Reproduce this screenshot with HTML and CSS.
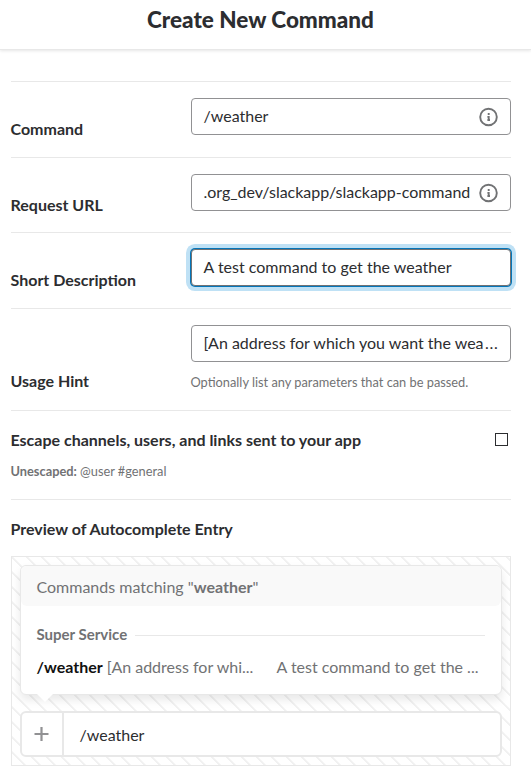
FILE: index.html
```
<!DOCTYPE html>
<html lang="en">
<head>
<meta charset="utf-8">
<title>Create New Command</title>
<link rel="stylesheet" href="styles.css">
</head>
<body>
<header class="header"><h1 class="title">Create New Command</h1></header>
<main class="form">
  <div class="row">
    <span class="label">Command</span>
    <div class="field"><span class="value">/weather</span>
      <svg class="info" viewBox="0 0 20 20"><circle cx="9.5" cy="10" r="8.3"/><path d="M9.7 6v2M8.4 9.9h1.3v3.8M8.4 13h2.6"/></svg>
    </div>
  </div>
  <div class="row">
    <span class="label">Request URL</span>
    <div class="field"><span class="value value-url">.org_dev/slackapp/slackapp-command</span>
      <svg class="info" viewBox="0 0 20 20"><circle cx="9.5" cy="10" r="8.3"/><path d="M9.7 6v2M8.4 9.9h1.3v3.8M8.4 13h2.6"/></svg>
    </div>
  </div>
  <div class="row">
    <span class="label">Short Description</span>
    <div class="field focused"><span class="value">A test command to get the weather</span></div>
  </div>
  <div class="row row-hint">
    <span class="label">Usage Hint</span>
    <div class="column">
      <div class="field"><span class="value value-hint">[An address for which you want the wea<span class="dots">...</span></span></div>
      <p class="note">Optionally list any parameters that can be passed.</p>
    </div>
  </div>
  <div class="escape">
    <div class="escape-head"><span class="label">Escape channels, users, and links sent to your app</span><span class="checkbox"></span></div>
    <p class="note"><b>Unescaped:</b> @user #general</p>
  </div>
  <section class="preview-section">
    <h2 class="label">Preview of Autocomplete Entry</h2>
    <div class="preview">
      <div class="popup">
        <div class="popup-head">Commands matching "<b>weather</b>"</div>
        <div class="service"><b>Super Service</b></div>
        <div class="entry">
          <span class="entry-command"><b>/weather</b> [An address for whi...</span>
          <span class="entry-desc">A test command to get the ...</span>
        </div>
      </div>
      <div class="composer">
        <div class="plus"><svg viewBox="0 0 16 16"><path d="M7.5 1v14M.5 8h14"/></svg></div>
        <span class="message">/weather</span>
      </div>
    </div>
  </section>
</main>
</body>
</html>
```
FILE: styles.css
```
* { box-sizing: border-box; }
body { margin: 0; width: 531px; height: 782px; overflow: hidden; background: #fff; color: #2c2d30; font: 16px/24px Lato, sans-serif; }
h1, h2, p { margin: 0; }
.header { height: 50px; padding-right: 10px; border-bottom: 1px solid #e8e8e8; box-shadow: 0 1px 3px rgba(0,0,0,.1); text-align: center; }
.title { font-size: 22.5px; line-height: 40px; font-weight: 900; }
.form { width: 500px; margin: 31px 0 0 11px; }
.row { display: flex; height: 76px; border-top: 1px solid #e8e8e8; padding-top: 16px; }
.row:nth-child(2) { height: 75px; }
.label { font-size: 16px; line-height: 24px; font-weight: 700; white-space: nowrap; margin-left: -0.5px; }
.row > .label { width: 180.5px; padding-top: 19px; }
.field { width: 320px; height: 37px; flex: none; display: flex; align-items: center; border: 1px solid #919193; border-radius: 4px; padding: 0 11px 0 11.5px; background: #fff; white-space: nowrap; }
.value { flex: 1; padding-bottom: 2px; }
.value-url { letter-spacing: -.02px; }
.dots { margin-left: 1.5px; letter-spacing: .7px; }
.info { width: 20px; height: 20px; fill: none; stroke: #717274; stroke-width: 1.9; }
.focused { border-color: #717274; box-shadow: 0 0 0 1px #0576b9, 0 0 0 5px #bfe1f5; }
.row.row-hint { height: 102px; }
.row-hint > .label { padding-top: 44px; }
.note { color: #717274; font-size: 12.8px; line-height: 18px; margin-left: -0.5px; }
.column .note { margin-top: 11px; }
.escape { height: 89px; border-top: 1px solid #e8e8e8; padding-top: 17px; }
.escape-head { display: flex; justify-content: space-between; align-items: center; }
.checkbox { width: 13px; height: 13px; margin: 0 3px 1px 0; border: 1px solid #2c2d30; }
.escape .note { margin-top: 10px; }
.preview-section { border-top: 1px solid #e8e8e8; padding-top: 17px; }
.preview { height: 210px; margin-top: 15px; padding: 8px 9px; border: 1px solid #e8e8e8; background: repeating-linear-gradient(45deg, #fff 0 7.8px, #f1f1f1 8.3px 9.7px, #fff 10.2px 10.607px); }
.popup { position: relative; width: 482px; height: 130px; border: 1px solid #e8e8e8; border-radius: 6px; background: #fff; box-shadow: 0 5px 10px rgba(0,0,0,.09); color: #717274; margin-left: -1px; }
.popup::after { content: ""; position: absolute; left: 16px; bottom: -8px; border: solid transparent; border-width: 8px 8px 0; border-top-color: #fff; }
.popup-head { height: 40px; padding: 9px 15.5px; background: #f9f9f9; border-radius: 6px; }
.service { display: flex; align-items: center; gap: 8px; margin: 16px 16px 0 15.5px; font-size: 15px; }
.service::after { content: ""; flex: 1; height: 1px; margin-top: 2px; background: #e8e8e8; }
.entry { display: flex; margin: 9px 16px 0 15.5px; white-space: nowrap; }
.entry b { color: #111; }
.entry-command { width: 240px; }
.composer { display: flex; width: 482px; height: 46px; margin: 16px 0 0 -1px; border: 2px solid #e8e8e8; border-radius: 6px; background: #fff; }
.plus { display: grid; place-items: center; width: 42px; border-right: 2px solid #e8e8e8; }
.plus svg { width: 16px; height: 16px; fill: none; stroke: #919193; stroke-width: 2.2; }
.message { padding: 10px 15.5px; }
```
